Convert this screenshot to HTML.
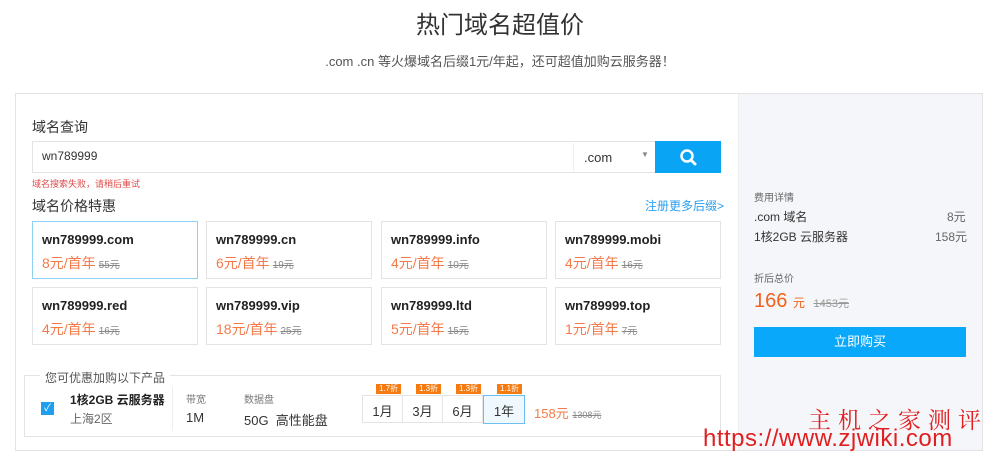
<!DOCTYPE html>
<html><head><meta charset="utf-8"><style>
*{margin:0;padding:0;box-sizing:border-box}
body{width:1000px;height:457px;background:#fff;font-family:"Liberation Sans","Noto Sans CJK SC",sans-serif;position:relative;overflow:hidden;color:#333}
.a{position:absolute}
.card{position:absolute;width:166px;height:58px;border:1px solid #e3e3e3;background:#fff}
.card.sel{border-color:#8fd0f5}
.card b{position:absolute;left:9px;top:10px;font-size:13px;color:#222}
.card .p{position:absolute;left:9px;top:31px;font-size:14px;color:#f47a4a}
.card .p s{font-size:10px;color:#888;margin-left:3px}
.tag{position:absolute;top:-12px;left:13px;background:#f57a10;color:#fff;font-size:8px;padding:0 3px;height:10px;line-height:10px}
.m{position:absolute;top:0;height:32px;border-right:1px solid #e5e5e5;width:40px;text-align:center;font-size:13px;padding-top:9px}
</style></head><body>
<div class="a" style="left:0;top:5px;width:1000px;text-align:center;font-size:24px;color:#333">热门域名超值价</div>
<div class="a" style="left:0;top:51px;width:1000px;text-align:center;font-size:13px;color:#555">.com .cn 等火爆域名后缀1元/年起，还可超值加购云服务器！</div>
<div class="a" style="left:15px;top:93px;width:968px;height:358px;border:1px solid #e3e3e3"></div>
<div class="a" style="left:738px;top:94px;width:244px;height:356px;background:#f5f6fa;border-left:1px solid #eee"></div>
<div class="a" style="left:32px;top:117px;font-size:14px">域名查询</div>
<div class="a" style="left:32px;top:141px;width:624px;height:32px;border:1px solid #e3e3e3"></div>
<div class="a" style="left:42px;top:149px;font-size:12px">wn789999</div>
<div class="a" style="left:573px;top:143px;height:28px;border-left:1px solid #eee"></div>
<div class="a" style="left:584px;top:150px;font-size:13px">.com</div>
<div class="a" style="left:641px;top:150px;font-size:8px;color:#888">▼</div>
<div class="a" style="left:655px;top:141px;width:66px;height:32px;background:#0aa4f5">
<svg width="66" height="32"><circle cx="32" cy="15" r="5.5" fill="none" stroke="#fff" stroke-width="2.5"/><line x1="36" y1="19" x2="40" y2="23" stroke="#fff" stroke-width="3" stroke-linecap="round"/></svg></div>
<div class="a" style="left:32px;top:177px;font-size:9px;color:#e04a4a">域名搜索失败，请稍后重试</div>
<div class="a" style="left:32px;top:196px;font-size:14px">域名价格特惠</div>
<div class="a" style="left:645px;top:197px;font-size:12px;color:#2d9ff0">注册更多后缀&gt;</div>
<div class="card sel" style="left:32px;top:221px"><b>wn789999.com</b><span class="p">8元/首年<s>55元</s></span></div>
<div class="card" style="left:206px;top:221px"><b>wn789999.cn</b><span class="p">6元/首年<s>19元</s></span></div>
<div class="card" style="left:381px;top:221px"><b>wn789999.info</b><span class="p">4元/首年<s>10元</s></span></div>
<div class="card" style="left:555px;top:221px"><b>wn789999.mobi</b><span class="p">4元/首年<s>16元</s></span></div>
<div class="card" style="left:32px;top:287px"><b>wn789999.red</b><span class="p">4元/首年<s>16元</s></span></div>
<div class="card" style="left:206px;top:287px"><b>wn789999.vip</b><span class="p">18元/首年<s>25元</s></span></div>
<div class="card" style="left:381px;top:287px"><b>wn789999.ltd</b><span class="p">5元/首年<s>15元</s></span></div>
<div class="card" style="left:555px;top:287px"><b>wn789999.top</b><span class="p">1元/首年<s>7元</s></span></div>
<div class="a" style="left:24px;top:375px;width:697px;height:62px;border:1px solid #e3e3e3"></div>
<div class="a" style="left:40px;top:369px;background:#fff;padding:0 5px;font-size:12px;color:#555">您可优惠加购以下产品</div>
<div class="a" style="left:41px;top:402px;width:13px;height:13px;background:#1e9ff0;color:#fff;font-size:10px;line-height:13px;text-align:center">✓</div>
<div class="a" style="left:70px;top:391px;font-size:12px;font-weight:bold;color:#222">1核2GB 云服务器</div>
<div class="a" style="left:70px;top:410px;font-size:12px;color:#666">上海2区</div>
<div class="a" style="left:172px;top:387px;height:44px;border-left:1px solid #eee"></div>
<div class="a" style="left:186px;top:391px;font-size:10px;color:#777">带宽</div>
<div class="a" style="left:186px;top:410px;font-size:13px">1M</div>
<div class="a" style="left:244px;top:391px;font-size:10px;color:#777">数据盘</div>
<div class="a" style="left:244px;top:410px;font-size:13px">50G&nbsp; 高性能盘</div>
<div class="a" style="left:362px;top:395px;width:162px;height:28px;border:1px solid #e3e3e3">
<div class="m" style="left:0;padding-top:5px;height:27px">1月<span class="tag">1.7折</span></div>
<div class="m" style="left:40px;padding-top:5px;height:27px">3月<span class="tag">1.3折</span></div>
<div class="m" style="left:80px;padding-top:5px;height:27px">6月<span class="tag">1.3折</span></div>
<div class="m" style="left:120px;top:-1px;height:29px;width:42px;padding-top:5px;border:1px solid #6cc0f0;background:#eef8fe">1年<span class="tag">1.1折</span></div>
</div>
<div class="a" style="left:534px;top:403px;font-size:13px;color:#f47a4a">158元 <s style="font-size:9px;color:#888">1308元</s></div>
<div class="a" style="left:754px;top:189px;font-size:10px;color:#666">费用详情</div>
<div class="a" style="left:754px;top:208px;font-size:12px">.com 域名</div>
<div class="a" style="left:947px;top:208px;font-size:12px;color:#666">8元</div>
<div class="a" style="left:754px;top:228px;font-size:12px">1核2GB 云服务器</div>
<div class="a" style="left:935px;top:228px;font-size:12px;color:#666">158元</div>
<div class="a" style="left:754px;top:270px;font-size:10px;color:#666">折后总价</div>
<div class="a" style="left:754px;top:290px;font-size:20px;color:#f5601a">166 <span style="font-size:12px">元</span> <s style="font-size:11px;color:#999;margin-left:3px">1453元</s></div>
<div class="a" style="left:754px;top:327px;width:212px;height:30px;background:#0aa8fa;color:#fff;font-size:13px;text-align:center;line-height:30px">立即购买</div>
<div class="a" style="left:808px;top:402px;font-size:23px;color:#e02020;letter-spacing:7px;font-family:'Liberation Serif','Noto Serif CJK SC',serif">主机之家测评</div>
<div class="a" style="left:703px;top:425px;font-size:24px;color:#e02020;font-family:'Liberation Sans',sans-serif;letter-spacing:0.5px">https://www.zjwiki.com</div>
</body></html>
